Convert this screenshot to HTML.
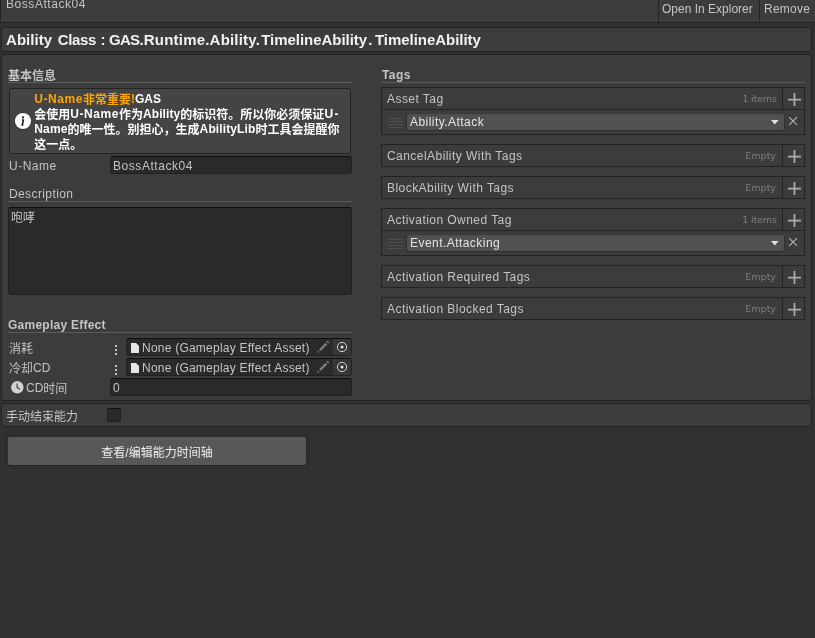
<!DOCTYPE html>
<html lang="zh">
<head>
<meta charset="utf-8">
<title>BossAttack04</title>
<style>
*{box-sizing:border-box;margin:0;padding:0}
html,body{width:815px;height:638px;overflow:hidden;background:#313131}
body{position:relative;font-family:"Liberation Sans","Noto Sans CJK SC",sans-serif;font-size:12px;color:#c4c4c4;line-height:1}
.abs{position:absolute}
.box{position:absolute;background:#3c3c3c;border:1px solid #232323;border-radius:3px}
.t{position:absolute;white-space:nowrap;line-height:16px;height:16px}
.b{font-weight:bold}
.sep{position:absolute;height:1px;background:#5a5a5a}
.inp{position:absolute;background:#2a2a2a;border:1px solid #212121;border-top-color:#0f0f0f;border-radius:3px}
.hdr{position:absolute;background:#3c3c3c;border:1px solid #232323}
.cnt{position:absolute;white-space:nowrap;font-family:'DejaVu Sans',sans-serif;font-size:9.5px;color:#7e7e7e;line-height:12px;text-align:right}
.dd{position:absolute;background:#515151;border:1px solid #303030;border-top-color:#4c4c4c;border-radius:3px}
.sg{display:inline-block;white-space:pre;vertical-align:top;height:18px}
svg{position:absolute;overflow:visible}
</style>
</head>
<body>
<div id="root" style="position:absolute;left:0;top:0;width:815px;height:638px;will-change:transform">

<!-- top header bar -->
<div class="box" style="left:0;top:-4px;width:830px;height:27px;border-radius:0"></div>
<div class="t" id="t_top" style="left:6px;top:-4px;letter-spacing:.55px">BossAttack04</div>
<div class="abs" style="left:658px;top:0;width:1px;height:22px;background:#232323"></div>
<div class="abs" style="left:759px;top:0;width:1px;height:22px;background:#232323"></div>
<div class="t" id="t_open" style="left:662px;top:1px;letter-spacing:0px">Open In Explorer</div>
<div class="t" id="t_rem" style="left:764px;top:1px;letter-spacing:.25px">Remove</div>

<!-- ability class -->
<div class="box" style="left:1px;top:27px;width:811px;height:25px"></div>
<div class="b" style="position:absolute;left:6px;top:31px;width:800px;height:18px;font-size:15px;line-height:18px;color:#f2f2f2;white-space:pre"><span class="sg" id="t_clsa" style="width:51.7px;letter-spacing:0.05px">Ability </span><span class="sg" id="t_clsb" style="width:42.7px;letter-spacing:-0.35px">Class </span><span class="sg" id="t_clsc" style="width:8.6px;letter-spacing:0px">: </span><span class="sg" id="t_clsd" style="width:30.5px;letter-spacing:-0.7px">GAS</span><span class="sg" id="t_clse" style="width:121.7px;letter-spacing:0.2px">.Runtime.Ability.</span><span class="sg" id="t_clsf" style="width:107.2px;letter-spacing:-0.03px">TimelineAbility</span><span class="sg" id="t_clsg" style="width:6.6px;letter-spacing:0px">.</span><span class="sg" id="t_clsh" style="width:110.0px;letter-spacing:-0.03px">TimelineAbility</span></div>

<!-- main box -->
<div class="box" style="left:1px;top:54px;width:811px;height:347px"></div>

<!-- left column -->
<div class="t b" id="t_basic" style="left:8px;top:68px">基本信息</div>
<div class="sep" style="left:8px;top:82px;width:344px"></div>

<div class="abs" style="left:9px;top:88px;width:342px;height:66px;background:#444444;border:1px solid #232323;border-radius:3px"></div>
<svg style="left:15px;top:113px" width="16" height="16" viewBox="0 0 16 16"><circle cx="8" cy="8" r="8.8" fill="#333"/><circle cx="8" cy="8" r="8.1" fill="#fff"/><circle cx="8" cy="4.4" r="1.15" fill="#1e1e1e"/><path d="M8.4 6.4L7.3 12.4" stroke="#1e1e1e" stroke-width="1.7" fill="none"/><path d="M6.8 6.9h1.6M6.4 12.2h1.9" stroke="#1e1e1e" stroke-width=".9" fill="none"/></svg>
<div class="t b" id="t_h1" style="left:34.3px;top:93px;color:#fff;line-height:15px;height:15px"><span style="color:#ffa500"><span style="position:relative;top:-1px;letter-spacing:0.55px;">U-Name</span>非常重要<span style="position:relative;top:-1px;letter-spacing:0px;">!</span></span><span style="position:relative;top:-1px;letter-spacing:0px;">GAS</span></div>
<div class="t b" id="t_h2" style="left:34.3px;top:108px;color:#fff;line-height:15px;height:15px">会使用<span style="position:relative;top:-1px;letter-spacing:0.55px;">U-Name</span>作为<span style="position:relative;top:-1px;letter-spacing:0.1px;">Ability</span>的标识符。所以你必须保证<span style="position:relative;top:-1px;letter-spacing:1.4px;">U-</span></div>
<div class="t b" id="t_h3" style="left:34.3px;top:123px;color:#fff;line-height:15px;height:15px"><span style="position:relative;top:-1px;letter-spacing:0.15px;">Name</span>的唯一性。别担心，生成<span style="position:relative;top:-1px;letter-spacing:0.12px;">AbilityLib</span>时工具会提醒你</div>
<div class="t b" id="t_h4" style="left:34.3px;top:138px;color:#fff;line-height:15px;height:15px">这一点。</div>

<div class="t" id="t_uname" style="left:9px;top:158px;letter-spacing:.5px">U-Name</div>
<div class="inp" style="left:110px;top:156px;width:242px;height:18px"></div>
<div class="t" id="t_uval" style="left:113px;top:158px;letter-spacing:.55px">BossAttack04</div>

<div class="t" id="t_desc" style="left:9px;top:186px;letter-spacing:.39px">Description</div>
<div class="sep" style="left:8px;top:201px;width:344px"></div>
<div class="inp" style="left:8px;top:207px;width:344px;height:88px"></div>
<div class="t" id="t_roar" style="left:11px;top:210px">咆哮</div>

<div class="t b" id="t_ge" style="left:8px;top:317px;letter-spacing:.25px">Gameplay Effect</div>
<div class="sep" style="left:8px;top:332px;width:344px"></div>

<div class="t" id="t_cost" style="left:9px;top:341px">消耗</div>
<div class="abs" style="left:115px;top:345px;width:2px;height:2px;background:#c4c4c4;box-shadow:0 4px 0 #c4c4c4,0 8px 0 #c4c4c4"></div>
<div class="inp" style="left:126px;top:338px;width:226px;height:18px"></div>
<div class="abs" style="left:333px;top:339px;width:18px;height:16px;background:#373737;border-radius:0 2px 2px 0"></div>
<svg style="left:131px;top:343px" width="8" height="10" viewBox="0 0 8 10"><path d="M0 0h5l3 3v7H0z" fill="#e6e6e6"/></svg>
<div class="t" id="t_none1" style="left:142px;top:340px;letter-spacing:.23px">None (Gameplay Effect Asset)</div>
<svg style="left:317px;top:341px" width="12" height="12" viewBox="0 0 12 12"><path d="M2.9 9.1L9.4 2.6" stroke="#7c7c7c" stroke-width="2.4" fill="none"/><path d="M10.4 1.6L11.3.7" stroke="#8a8a8a" stroke-width="2.4" fill="none"/><path d="M.2 11.8L1 9.5l1.5 1.5z" fill="#8a8a8a"/></svg>
<svg style="left:336px;top:341px" width="12" height="12" viewBox="0 0 12 12"><circle cx="6" cy="6" r="4.6" fill="none" stroke="#d2d2d2" stroke-width="1"/><circle cx="6" cy="6" r="1.5" fill="#e8e8e8"/></svg>

<div class="t" id="t_cd" style="left:9px;top:361px">冷却<span style="position:relative;top:-1px">CD</span></div>
<div class="abs" style="left:115px;top:365px;width:2px;height:2px;background:#c4c4c4;box-shadow:0 4px 0 #c4c4c4,0 8px 0 #c4c4c4"></div>
<div class="inp" style="left:126px;top:358px;width:226px;height:18px"></div>
<div class="abs" style="left:333px;top:359px;width:18px;height:16px;background:#373737;border-radius:0 2px 2px 0"></div>
<svg style="left:131px;top:363px" width="8" height="10" viewBox="0 0 8 10"><path d="M0 0h5l3 3v7H0z" fill="#e6e6e6"/></svg>
<div class="t" id="t_none2" style="left:142px;top:360px;letter-spacing:.23px">None (Gameplay Effect Asset)</div>
<svg style="left:317px;top:361px" width="12" height="12" viewBox="0 0 12 12"><path d="M2.9 9.1L9.4 2.6" stroke="#7c7c7c" stroke-width="2.4" fill="none"/><path d="M10.4 1.6L11.3.7" stroke="#8a8a8a" stroke-width="2.4" fill="none"/><path d="M.2 11.8L1 9.5l1.5 1.5z" fill="#8a8a8a"/></svg>
<svg style="left:336px;top:361px" width="12" height="12" viewBox="0 0 12 12"><circle cx="6" cy="6" r="4.6" fill="none" stroke="#d2d2d2" stroke-width="1"/><circle cx="6" cy="6" r="1.5" fill="#e8e8e8"/></svg>

<svg style="left:10.6px;top:380.7px" width="12.6" height="12.6" viewBox="0 0 13 13"><circle cx="6.5" cy="6.5" r="6.4" fill="#d2d2d2"/><path d="M6.3 2.6v4.1l2.9 1.9" fill="none" stroke="#3c3c3c" stroke-width="1.15"/></svg>
<div class="t" id="t_cdt" style="left:26px;top:381px"><span style="position:relative;top:-1px">CD</span>时间</div>
<div class="inp" style="left:110px;top:378px;width:242px;height:18px"></div>
<div class="t" id="t_zero" style="left:113px;top:380px">0</div>

<!-- right column -->
<div class="t b" id="t_tags" style="left:382px;top:67px;letter-spacing:.4px">Tags</div>
<div class="sep" style="left:381px;top:82px;width:424px"></div>

<!-- list Asset Tag -->
<div class="hdr" style="left:381px;top:109px;width:424px;height:26px"></div>
<div class="hdr" style="left:381px;top:87px;width:424px;height:23px"></div>
<div class="abs" style="left:782px;top:87px;width:1px;height:23px;background:#232323"></div>
<div class="t" id="t_l0" style="left:387px;top:91px;letter-spacing:.45px">Asset Tag</div>
<div class="cnt" id="t_c0" style="left:699.8px;width:77px;top:93px;letter-spacing:-.12px">1 items</div>
<svg style="left:788.3px;top:92.8px" width="13" height="13" viewBox="0 0 13 13"><path d="M0 6.5h13M6.5 0v13" stroke="#ababab" stroke-width="1.75" fill="none"/></svg>
<div class="abs" style="left:388px;top:118px;width:15px;height:1px;background:#4e4e4e;box-shadow:0 3px 0 #4e4e4e,0 6px 0 #4e4e4e,0 9px 0 #4e4e4e"></div>
<div class="dd" style="left:406px;top:114px;width:379px;height:17px"></div>
<div class="t" id="t_i0" style="left:410px;top:114px;color:#e4e4e4;letter-spacing:.45px">Ability.Attack</div>
<svg style="left:771.1px;top:119.8px" width="7.6" height="4.5" viewBox="0 0 7.6 4.5"><path d="M0 0h7.6L3.8 4.5z" fill="#e0e0e0"/></svg>
<svg style="left:789.4px;top:116.8px" width="8.2" height="8" viewBox="0 0 8.2 8"><path d="M.2.2l7.8 7.6M8 .2L.2 7.8" stroke="#b8b8b8" stroke-width="1.05" fill="none"/></svg>
<!-- list CancelAbility With Tags -->
<div class="hdr" style="left:381px;top:144px;width:424px;height:23px"></div>
<div class="abs" style="left:782px;top:144px;width:1px;height:23px;background:#232323"></div>
<div class="t" id="t_l1" style="left:387px;top:148px;letter-spacing:.45px">CancelAbility With Tags</div>
<div class="cnt" id="t_c1" style="left:699px;width:77px;top:150px;letter-spacing:0px">Empty</div>
<svg style="left:788.3px;top:149.8px" width="13" height="13" viewBox="0 0 13 13"><path d="M0 6.5h13M6.5 0v13" stroke="#ababab" stroke-width="1.75" fill="none"/></svg>
<!-- list BlockAbility With Tags -->
<div class="hdr" style="left:381px;top:176px;width:424px;height:23px"></div>
<div class="abs" style="left:782px;top:176px;width:1px;height:23px;background:#232323"></div>
<div class="t" id="t_l2" style="left:387px;top:180px;letter-spacing:.45px">BlockAbility With Tags</div>
<div class="cnt" id="t_c2" style="left:699px;width:77px;top:182px;letter-spacing:0px">Empty</div>
<svg style="left:788.3px;top:181.8px" width="13" height="13" viewBox="0 0 13 13"><path d="M0 6.5h13M6.5 0v13" stroke="#ababab" stroke-width="1.75" fill="none"/></svg>
<!-- list Activation Owned Tag -->
<div class="hdr" style="left:381px;top:230px;width:424px;height:26px"></div>
<div class="hdr" style="left:381px;top:208px;width:424px;height:23px"></div>
<div class="abs" style="left:782px;top:208px;width:1px;height:23px;background:#232323"></div>
<div class="t" id="t_l3" style="left:387px;top:212px;letter-spacing:.45px">Activation Owned Tag</div>
<div class="cnt" id="t_c3" style="left:699.8px;width:77px;top:214px;letter-spacing:-.12px">1 items</div>
<svg style="left:788.3px;top:213.8px" width="13" height="13" viewBox="0 0 13 13"><path d="M0 6.5h13M6.5 0v13" stroke="#ababab" stroke-width="1.75" fill="none"/></svg>
<div class="abs" style="left:388px;top:239px;width:15px;height:1px;background:#4e4e4e;box-shadow:0 3px 0 #4e4e4e,0 6px 0 #4e4e4e,0 9px 0 #4e4e4e"></div>
<div class="dd" style="left:406px;top:235px;width:379px;height:17px"></div>
<div class="t" id="t_i3" style="left:410px;top:235px;color:#e4e4e4;letter-spacing:.45px">Event.Attacking</div>
<svg style="left:771.1px;top:240.8px" width="7.6" height="4.5" viewBox="0 0 7.6 4.5"><path d="M0 0h7.6L3.8 4.5z" fill="#e0e0e0"/></svg>
<svg style="left:789.4px;top:237.8px" width="8.2" height="8" viewBox="0 0 8.2 8"><path d="M.2.2l7.8 7.6M8 .2L.2 7.8" stroke="#b8b8b8" stroke-width="1.05" fill="none"/></svg>
<!-- list Activation Required Tags -->
<div class="hdr" style="left:381px;top:265px;width:424px;height:23px"></div>
<div class="abs" style="left:782px;top:265px;width:1px;height:23px;background:#232323"></div>
<div class="t" id="t_l4" style="left:387px;top:269px;letter-spacing:.45px">Activation Required Tags</div>
<div class="cnt" id="t_c4" style="left:699px;width:77px;top:271px;letter-spacing:0px">Empty</div>
<svg style="left:788.3px;top:270.8px" width="13" height="13" viewBox="0 0 13 13"><path d="M0 6.5h13M6.5 0v13" stroke="#ababab" stroke-width="1.75" fill="none"/></svg>
<!-- list Activation Blocked Tags -->
<div class="hdr" style="left:381px;top:297px;width:424px;height:23px"></div>
<div class="abs" style="left:782px;top:297px;width:1px;height:23px;background:#232323"></div>
<div class="t" id="t_l5" style="left:387px;top:301px;letter-spacing:.45px">Activation Blocked Tags</div>
<div class="cnt" id="t_c5" style="left:699px;width:77px;top:303px;letter-spacing:0px">Empty</div>
<svg style="left:788.3px;top:302.8px" width="13" height="13" viewBox="0 0 13 13"><path d="M0 6.5h13M6.5 0v13" stroke="#ababab" stroke-width="1.75" fill="none"/></svg>

<!-- bottom -->
<div class="box" style="left:1px;top:403px;width:811px;height:24px"></div>
<div class="t" id="t_manual" style="left:6px;top:409px">手动结束能力</div>
<div class="inp" style="left:107px;top:408px;width:14px;height:14px;border-radius:2.5px"></div>

<div class="abs" style="left:4px;top:433px;width:306px;height:36px;background:#2e2e2e"></div>
<div class="abs" style="left:8px;top:437px;width:298px;height:28px;background:#585858;border-radius:2px;box-shadow:0 1px 0 #262626"></div>
<div class="t" id="t_btn" style="left:8px;top:445px;width:298px;text-align:center;color:#eeeeee">查看/编辑能力时间轴</div>

</div>
</body>
</html>
